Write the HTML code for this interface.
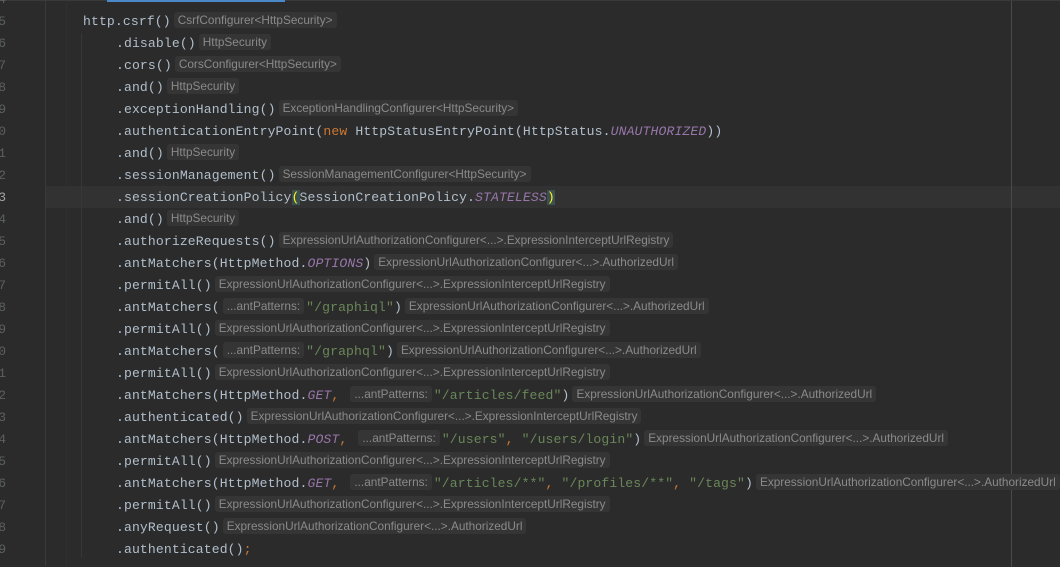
<!DOCTYPE html>
<html><head><meta charset="utf-8"><style>
html,body{margin:0;padding:0}
body{width:1060px;height:566px;background:#2b2b2b;position:relative;overflow:hidden;font-family:"Liberation Mono",monospace;}
.top{position:absolute;left:0;top:0;width:1060px;height:1px;background:#3a3a3a}
.tab{position:absolute;left:107px;top:0;width:178px;height:2px;background:#4a88c7}
.g1{position:absolute;left:45px;top:0;width:1px;height:566px;background:#3a3a3a}
.g2{position:absolute;left:66px;top:0;width:1px;height:566px;background:#303030}
.ig{position:absolute;left:81px;top:33px;width:1px;height:524px;background:#373737}
.rm{position:absolute;left:1011px;top:1px;width:1px;height:566px;background:#4a4a4a}
.cur{position:absolute;left:46px;top:186px;width:1014px;height:22px;background:#323232}
.ln{position:absolute;right:1054px;width:20px;text-align:right;color:#5c5f61;font-size:13px;line-height:22px}
.row{position:absolute;left:116px;height:22px;line-height:22px;font-size:13.1px;letter-spacing:0.12px;color:#b1bfcc;white-space:pre}
.h{display:inline-block;font-family:"Liberation Sans",sans-serif;font-size:11.8px;letter-spacing:0;color:#8a8a8a;background:#353535;border-radius:3px;padding:0 4px;height:16px;line-height:16px;vertical-align:1px;margin:0 2px 0 3px}
.p{color:#9876aa;font-style:italic}
.s{color:#6a8759}
.k{color:#cc7832}
.b{background:#3b514d;color:#ffef28}
</style></head><body>
<div class="top"></div><div class="tab"></div>
<div class="g1"></div><div class="g2"></div><div class="cur"></div><div class="ig"></div><div class="rm"></div>
<div class="ln" style="top:-11px">4</div>
<div class="ln" style="top:11px">5</div>
<div class="ln" style="top:33px">6</div>
<div class="ln" style="top:55px">7</div>
<div class="ln" style="top:77px">8</div>
<div class="ln" style="top:99px">9</div>
<div class="ln" style="top:121px">0</div>
<div class="ln" style="top:143px">1</div>
<div class="ln" style="top:165px">2</div>
<div class="ln" style="top:187px;color:#a4a3a3">3</div>
<div class="ln" style="top:209px">4</div>
<div class="ln" style="top:231px">5</div>
<div class="ln" style="top:253px">6</div>
<div class="ln" style="top:275px">7</div>
<div class="ln" style="top:297px">8</div>
<div class="ln" style="top:319px">9</div>
<div class="ln" style="top:341px">0</div>
<div class="ln" style="top:363px">1</div>
<div class="ln" style="top:385px">2</div>
<div class="ln" style="top:407px">3</div>
<div class="ln" style="top:429px">4</div>
<div class="ln" style="top:451px">5</div>
<div class="ln" style="top:473px">6</div>
<div class="ln" style="top:495px">7</div>
<div class="ln" style="top:517px">8</div>
<div class="ln" style="top:539px">9</div>

<div class="row" style="top:11px;left:83px">http.csrf()<span class="h">CsrfConfigurer&lt;HttpSecurity&gt;</span></div>
<div class="row" style="top:33px">.disable()<span class="h">HttpSecurity</span></div>
<div class="row" style="top:55px">.cors()<span class="h">CorsConfigurer&lt;HttpSecurity&gt;</span></div>
<div class="row" style="top:77px">.and()<span class="h">HttpSecurity</span></div>
<div class="row" style="top:99px">.exceptionHandling()<span class="h">ExceptionHandlingConfigurer&lt;HttpSecurity&gt;</span></div>
<div class="row" style="top:121px">.authenticationEntryPoint(<span class="k">new</span> HttpStatusEntryPoint(HttpStatus.<span class="p">UNAUTHORIZED</span>))</div>
<div class="row" style="top:143px">.and()<span class="h">HttpSecurity</span></div>
<div class="row" style="top:165px">.sessionManagement()<span class="h">SessionManagementConfigurer&lt;HttpSecurity&gt;</span></div>
<div class="row" style="top:187px">.sessionCreationPolicy<span class="b">(</span>SessionCreationPolicy.<span class="p">STATELESS</span><span class="b">)</span></div>
<div class="row" style="top:209px">.and()<span class="h">HttpSecurity</span></div>
<div class="row" style="top:231px">.authorizeRequests()<span class="h">ExpressionUrlAuthorizationConfigurer&lt;...&gt;.ExpressionInterceptUrlRegistry</span></div>
<div class="row" style="top:253px">.antMatchers(HttpMethod.<span class="p">OPTIONS</span>)<span class="h">ExpressionUrlAuthorizationConfigurer&lt;...&gt;.AuthorizedUrl</span></div>
<div class="row" style="top:275px">.permitAll()<span class="h">ExpressionUrlAuthorizationConfigurer&lt;...&gt;.ExpressionInterceptUrlRegistry</span></div>
<div class="row" style="top:297px">.antMatchers(<span class="h">...antPatterns:</span><span class="s">"/graphiql"</span>)<span class="h">ExpressionUrlAuthorizationConfigurer&lt;...&gt;.AuthorizedUrl</span></div>
<div class="row" style="top:319px">.permitAll()<span class="h">ExpressionUrlAuthorizationConfigurer&lt;...&gt;.ExpressionInterceptUrlRegistry</span></div>
<div class="row" style="top:341px">.antMatchers(<span class="h">...antPatterns:</span><span class="s">"/graphql"</span>)<span class="h">ExpressionUrlAuthorizationConfigurer&lt;...&gt;.AuthorizedUrl</span></div>
<div class="row" style="top:363px">.permitAll()<span class="h">ExpressionUrlAuthorizationConfigurer&lt;...&gt;.ExpressionInterceptUrlRegistry</span></div>
<div class="row" style="top:385px">.antMatchers(HttpMethod.<span class="p">GET</span><span class="k">,</span> <span class="h">...antPatterns:</span><span class="s">"/articles/feed"</span>)<span class="h">ExpressionUrlAuthorizationConfigurer&lt;...&gt;.AuthorizedUrl</span></div>
<div class="row" style="top:407px">.authenticated()<span class="h">ExpressionUrlAuthorizationConfigurer&lt;...&gt;.ExpressionInterceptUrlRegistry</span></div>
<div class="row" style="top:429px">.antMatchers(HttpMethod.<span class="p">POST</span><span class="k">,</span> <span class="h">...antPatterns:</span><span class="s">"/users"</span><span class="k">,</span> <span class="s">"/users/login"</span>)<span class="h">ExpressionUrlAuthorizationConfigurer&lt;...&gt;.AuthorizedUrl</span></div>
<div class="row" style="top:451px">.permitAll()<span class="h">ExpressionUrlAuthorizationConfigurer&lt;...&gt;.ExpressionInterceptUrlRegistry</span></div>
<div class="row" style="top:473px">.antMatchers(HttpMethod.<span class="p">GET</span><span class="k">,</span> <span class="h">...antPatterns:</span><span class="s">"/articles/**"</span><span class="k">,</span> <span class="s">"/profiles/**"</span><span class="k">,</span> <span class="s">"/tags"</span>)<span class="h">ExpressionUrlAuthorizationConfigurer&lt;...&gt;.AuthorizedUrl</span></div>
<div class="row" style="top:495px">.permitAll()<span class="h">ExpressionUrlAuthorizationConfigurer&lt;...&gt;.ExpressionInterceptUrlRegistry</span></div>
<div class="row" style="top:517px">.anyRequest()<span class="h">ExpressionUrlAuthorizationConfigurer&lt;...&gt;.AuthorizedUrl</span></div>
<div class="row" style="top:539px">.authenticated()<span class="k">;</span></div>
</body></html>
